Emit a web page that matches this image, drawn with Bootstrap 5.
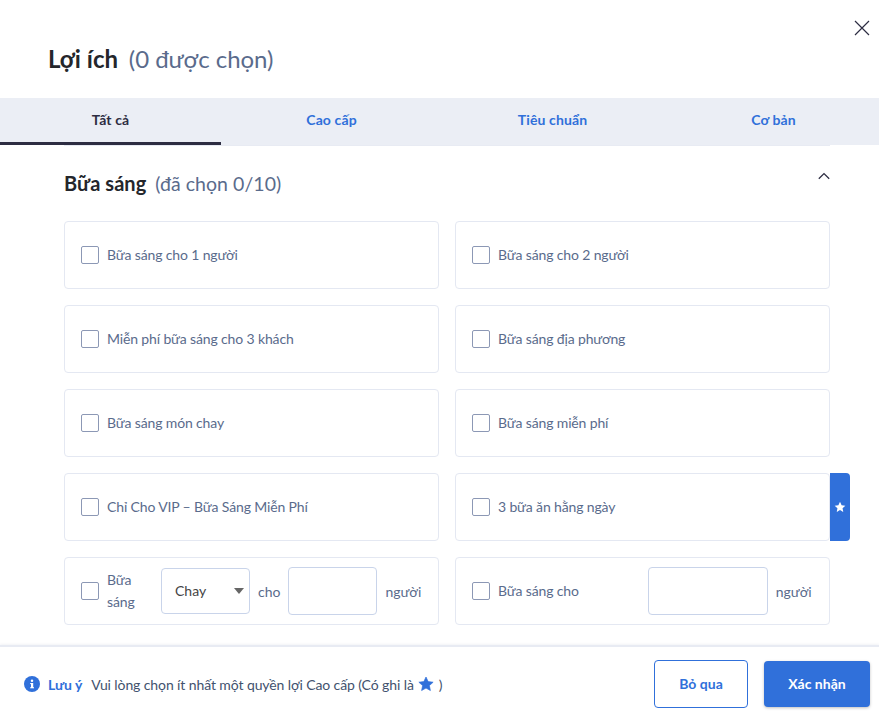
<!DOCTYPE html>
<html lang="vi">
<head>
  <meta charset="utf-8">
  <meta name="viewport" content="width=device-width,initial-scale=1">
  <title>Lợi ích</title>
  <link href="https://cdn.jsdelivr.net/npm/bootstrap@5.3.0/dist/css/bootstrap.min.css" rel="stylesheet">
  <style>
    html, body { height: 720px; overflow: hidden; }
    body { font-family: Lato, "Noto Sans", sans-serif; background: #fff; color: #5a6b8c; font-size: 14px; }
    .shell { height: 720px; }
    .head-area { height: 98px; padding: 43px 48px 0; }
    .head-title { font-size: 24px; line-height: 32px; font-weight: 700; color: #24262b; margin: 0; }
    .head-title span { font-weight: 400; color: #5a6b8c; margin-left: 5px; letter-spacing: -.05px; }
    .close-x { position: absolute; top: 20px; right: 9px; width: 16px; height: 16px; background: none; border: 0; padding: 0; line-height: 0; }
    .tab-bar { height: 47px; background: #ebeef5; width: 879px; overflow: hidden; }
    .tab-item { width: 221px; flex: none; height: 47px; padding-top: 13px; text-align: center; font-weight: 700; font-size: 14px; line-height: 18px; letter-spacing: .12px; color: #3070da; text-decoration: none; }
    .tab-item.is-on { color: #2d2d42; border-bottom: 3px solid #2d2d42; }
    .scroll-area { height: 500px; padding: 0 49px 0 64px; overflow: hidden; }
    .tab-rule { border-top: 1px solid #e8ebf3; margin-left: 64px; margin-right: 49px; height: 1px; }
    .sec-head { height: 75px; padding-top: 24px; }
    .sec-title { font-size: 20px; line-height: 26px; font-weight: 700; color: #24262b; margin: 0; letter-spacing: .05px; }
    .sec-title span { font-size: 19.5px; font-weight: 400; color: #5a6b8c; margin-left: 4px; }
    .sec-chev { margin-top: 2px; }
    .opt-box { height: 68px; border: 1px solid #e4e8f2; border-radius: 4px; padding: 0 16px; background: #fff; position: relative; }
    .opt-box .form-check-input { width: 18px; height: 18px; margin: 0; flex: none; border: 1px solid #8c98b5; border-radius: 2px; }
    .opt-text { margin-left: 8px; line-height: 22px; letter-spacing: -.14px; white-space: nowrap; }
    .opt-narrow { width: 46px; flex: none; white-space: normal; }
    .opt-box .form-select { width: 89px; height: 46px; flex: none; margin-left: 8px; padding: 0 0 2px 13px; border: 1px solid #c9d4ea; border-radius: 4px; font-size: 14px; color: #444; background-image: url("data:image/svg+xml,%3csvg xmlns='http://www.w3.org/2000/svg' viewBox='0 0 10 6'%3e%3cpath d='M0 0h10L5 6z' fill='%23666'/%3e%3c/svg%3e"); background-size: 10px 6px; background-position: right 5px center; }
    .opt-box .form-control { height: 48px; flex: none; border: 1px solid #c9d4ea; border-radius: 4px; }
    .w-small { width: 89px; }
    .w-big { width: 120px; margin-left: 69px; }
    .unit-text { margin-left: 8px; }
    .star-flag { position: absolute; top: -1px; bottom: -1px; left: 100%; margin-left: 1px; width: 20px; background: #3070da; border-radius: 0 4px 4px 0; }
    .foot-bar { height: 75px; border-top: 2px solid #e8ebf3; padding: 0 9px 0 24px; margin-top: -1px; background: #fff; box-shadow: 0 -1px 2px rgba(90,107,140,.08); }
    .foot-note { font-size: 14px; color: #42526e; white-space: nowrap; padding-top: 1px; }
    .foot-note b { color: #3070da; margin-left: 8px; margin-right: 9px; letter-spacing: -.05px; }
    .foot-text { letter-spacing: -.1px; }
    .foot-star { margin: 0 5px 0 4px; }
    .btn-skip, .btn-ok { font-weight: 700; font-size: 14px; border-radius: 4px; }
    .btn-skip { width: 94px; height: 48px; color: #3070da; border: 1px solid #3070da; background: #fff; }
    .btn-ok { width: 106px; height: 46px; color: #fff; background: #3070da; border: 0; box-shadow: 0 1px 3px rgba(0,0,0,.25); }
  </style>
</head>
<body>
  <div class="shell d-flex flex-column position-relative">
    <button class="close-x" aria-label="Đóng">
      <svg width="16" height="16" viewBox="0 0 16 16"><path d="M1 1l14 14M15 1L1 15" stroke="#2d2d42" stroke-width="1.2" fill="none"/></svg>
    </button>
    <div class="head-area">
      <h1 class="head-title">Lợi ích <span>(0 được chọn)</span></h1>
    </div>

    <div class="tab-bar d-flex">
      <a class="tab-item is-on" href="#">Tất cả</a>
      <a class="tab-item" href="#">Cao cấp</a>
      <a class="tab-item" href="#">Tiêu chuẩn</a>
      <a class="tab-item" href="#">Cơ bản</a>
    </div>
    <div class="tab-rule"></div>

    <div class="scroll-area flex-grow-1">
      <div class="sec-head d-flex justify-content-between">
        <h2 class="sec-title">Bữa sáng <span>(đã chọn 0/10)</span></h2>
        <svg class="sec-chev" width="12" height="8" viewBox="0 0 12 8"><path d="M.8 6.8L6 1.6l5.2 5.2" stroke="#2d2d42" stroke-width="1.3" fill="none"/></svg>
      </div>

      <div class="row g-3">
        <div class="col-6"><div class="opt-box d-flex align-items-center"><input class="form-check-input" type="checkbox"><span class="opt-text">Bữa sáng cho 1 người</span></div></div>
        <div class="col-6"><div class="opt-box d-flex align-items-center"><input class="form-check-input" type="checkbox"><span class="opt-text">Bữa sáng cho 2 người</span></div></div>
        <div class="col-6"><div class="opt-box d-flex align-items-center"><input class="form-check-input" type="checkbox"><span class="opt-text">Miễn phí bữa sáng cho 3 khách</span></div></div>
        <div class="col-6"><div class="opt-box d-flex align-items-center"><input class="form-check-input" type="checkbox"><span class="opt-text">Bữa sáng địa phương</span></div></div>
        <div class="col-6"><div class="opt-box d-flex align-items-center"><input class="form-check-input" type="checkbox"><span class="opt-text">Bữa sáng món chay</span></div></div>
        <div class="col-6"><div class="opt-box d-flex align-items-center"><input class="form-check-input" type="checkbox"><span class="opt-text">Bữa sáng miễn phí</span></div></div>
        <div class="col-6"><div class="opt-box d-flex align-items-center"><input class="form-check-input" type="checkbox"><span class="opt-text">Chỉ Cho VIP – Bữa Sáng Miễn Phí</span></div></div>
        <div class="col-6">
          <div class="opt-box d-flex align-items-center">
            <input class="form-check-input" type="checkbox"><span class="opt-text">3 bữa ăn hằng ngày</span>
            <div class="star-flag d-flex align-items-center justify-content-center">
              <svg width="12" height="12" viewBox="0 0 24 24"><path d="M12 1.5l3.2 6.9 7.5.9-5.6 5.1 1.5 7.4L12 18.1l-6.6 3.7 1.5-7.4L1.3 9.3l7.5-.9z" fill="#fff"/></svg>
            </div>
          </div>
        </div>
        <div class="col-6">
          <div class="opt-box d-flex align-items-center">
            <input class="form-check-input" type="checkbox">
            <span class="opt-text opt-narrow">Bữa sáng</span>
            <select class="form-select"><option>Chay</option></select>
            <span class="mx-2">cho</span>
            <input class="form-control w-small" type="text">
            <span class="unit-text">người</span>
          </div>
        </div>
        <div class="col-6">
          <div class="opt-box d-flex align-items-center">
            <input class="form-check-input" type="checkbox">
            <span class="opt-text">Bữa sáng cho</span>
            <input class="form-control w-big" type="text">
            <span class="unit-text">người</span>
          </div>
        </div>
      </div>
    </div>

    <div class="foot-bar d-flex align-items-center justify-content-between flex-shrink-0">
      <div class="foot-note d-flex align-items-center">
        <svg width="16" height="16" viewBox="0 0 16 16"><circle cx="8" cy="8" r="8" fill="#3070da"/><rect x="7" y="7" width="2.2" height="5" fill="#fff"/><rect x="6.2" y="7" width="2" height="1.1" fill="#fff"/><rect x="6.2" y="11.2" width="3.8" height="1.1" fill="#fff"/><circle cx="8" cy="4.8" r="1.25" fill="#fff"/></svg>
        <b>Lưu ý</b>
        <span class="foot-text">Vui lòng chọn ít nhất một quyền lợi Cao cấp (Có ghi là</span>
        <svg class="foot-star" width="16" height="16" viewBox="0 0 24 24"><path d="M12 1.5l3.2 6.9 7.5.9-5.6 5.1 1.5 7.4L12 18.1l-6.6 3.7 1.5-7.4L1.3 9.3l7.5-.9z" fill="#3070da" stroke="#3070da" stroke-width="1" stroke-linejoin="round"/></svg>
        <span>)</span>
      </div>
      <div class="d-flex align-items-center gap-3">
        <button class="btn btn-skip">Bỏ qua</button>
        <button class="btn btn-ok">Xác nhận</button>
      </div>
    </div>
  </div>
  <script src="https://cdn.jsdelivr.net/npm/bootstrap@5.3.0/dist/js/bootstrap.bundle.min.js"></script>
</body>
</html>
